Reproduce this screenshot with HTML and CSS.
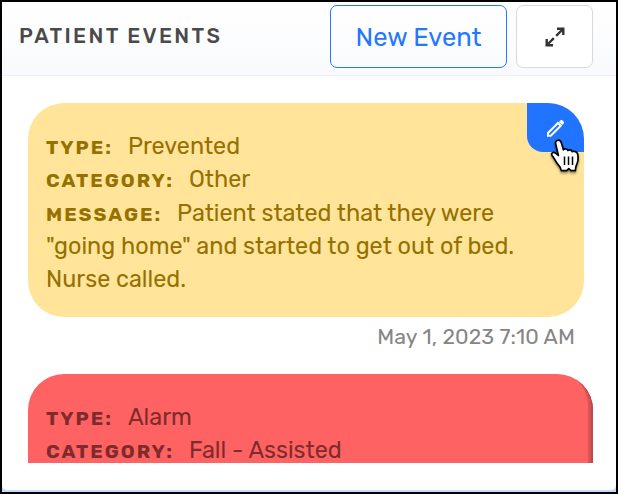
FILE: index.html
```html
<!DOCTYPE html>
<html lang="en">
<head>
    <meta charset="UTF-8">
    <meta name="viewport" content="width=device-width, initial-scale=1.0">
    <title>Patient Events</title>
    <link rel="stylesheet" href="styles.css">
</head>
<body>
    <div class="frame">
        <div class="panel">
            <div class="panel-header">
                <h1>PATIENT EVENTS</h1>
                <button class="new-button">New Event</button>
                <button class="expand-button" aria-label="Expand">
                    <svg width="20" height="20" viewBox="0 0 20 20" fill="none" stroke="#333" stroke-width="2.4">
                        <path d="M12 1.700h6.300V8M18 2l-6.800 6.800M8 18.300H1.700V12M2 18l6.800-6.800"/>
                    </svg>
                </button>
            </div>

            <div class="event-list">
                <div class="event warning">
                    <p><b>TYPE:</b><span class="value">Prevented</span></p>
                    <p><b>CATEGORY:</b><span class="value">Other</span></p>
                    <p><b>MESSAGE:</b><span class="value">Patient stated that they were<br>"going home" and started to get out of bed.<br>Nurse called.</span></p>
                    <button class="edit-button" aria-label="Edit">
                        <svg width="20" height="20" viewBox="0 0 20 20" fill="none" stroke="#fff" stroke-width="2">
                            <path d="M2 15 12 5l2.800 2.800L4.800 17.800H2z"/>
                            <path d="M13 3.900l1.700-1.700q.8-.7 1.600 0l1.500 1.500q.7.8 0 1.600l-1.700 1.700z" fill="#fff" stroke="none"/>
                        </svg>
                    </button>
                    <!-- hand pointer -->
                    <svg class="pointer" width="34" height="36" viewBox="0 0 34 36">
                        <path d="M9.500 2.200c1.900 0 2.700 1.600 3.200 3.600l1.700 6c1-1.400 3.600-1.300 4.500.700 1.300-1.200 3.600-.700 4.300 1.100 2-.900 4.900.100 5.500 2.700.6 3 .5 6.500-.6 9.200-.8 2-1.700 3-1.700 7.200h-4.500l-2.100-2-2 2h-5.500c-.3-3.700-2.700-5.400-4.400-7.700-1.700-2.300-2.700-5.300-4.600-7.200-1.300-1.400-.6-3.600 1.600-3.500 1.700.1 3 1.600 4.500 3.200L6.800 6.400C6 3.900 7.500 2.200 9.500 2.200z" fill="#fff" stroke="#000" stroke-width="1.700" stroke-linejoin="round"/>
                        <path d="M15.500 18.500v8.500M19.500 18.500v8.500M23.500 18.500v8.500" fill="none" stroke="#000" stroke-width="1.500"/>
                    </svg>
                </div>
                <time>May 1, 2023 7:10 AM</time>
                <div class="event danger">
                    <p><b>TYPE:</b><span class="value">Alarm</span></p>
                    <p><b>CATEGORY:</b><span class="value">Fall - Assisted</span></p>
                </div>
            </div>
        </div>
    </div>
</body>
</html>
```
FILE: styles.css
```css
* {
    margin: 0;
    padding: 0;
    box-sizing: border-box;
    font-family: Rubik, Roboto, sans-serif;
}

.frame {
    width: 618px;
    height: 494px;
    padding-bottom: 2px;
    border: 2px solid #000;
    background: #c9d9fb;
    overflow: hidden;
}

.panel {
    height: 488px;
    background: #fff;
    border-radius: 0 0 5px 5px;
}

.panel-header {
    display: flex;
    height: 74px;
    padding: 3px 23px 0 17px;
    border-bottom: 1px solid #eeeffa;
    background: linear-gradient(#fff, #f9fafd);
}

.panel-header h1 {
    flex: 1;
    color: #4a4a4a;
    font-size: 21px;
    font-weight: 500;
    line-height: 61px;
    letter-spacing: 2.3px;
    white-space: nowrap;
}

.panel-header button {
    height: 63px;
    border-radius: 7px;
}

.new-button {
    width: 177px;
    border: 1px solid #2478ff;
    background: transparent;
    color: #2478ff;
    font-size: 25.5px;
}

.expand-button {
    display: flex;
    align-items: center;
    justify-content: center;
    width: 77px;
    margin-left: 9px;
    border: 1px solid #d9d9dc;
    background: #fff;
}

.event-list {
    display: flex;
    flex-direction: column;
    height: 387px;
    padding: 27px 23px 0 26px;
    overflow: hidden;
}

.event {
    position: relative;
    flex-shrink: 0;
    padding: 27px 18px 0;
    border-radius: 36px;
    font-size: 23.4px;
    line-height: 33.3px;
}

.event p {
    white-space: nowrap;
}

.event b {
    margin-right: 15px;
    font-size: 19.5px;
    line-height: 1;
    letter-spacing: 2px;
}

.value {
    letter-spacing: 0;
}

.warning {
    width: 556px;
    height: 214px;
    background: #ffe499;
    color: #967000;
}

.danger {
    height: 214px;
    background: #ff6262;
    color: #7d2b2b;
    box-shadow: inset -2px -2px #b94a4d, inset -5px -4px #da5456;
}

.edit-button {
    position: absolute;
    top: 0;
    right: 0;
    display: flex;
    align-items: center;
    justify-content: center;
    width: 57px;
    height: 49px;
    border: none;
    border-radius: 0 36px 0 16px;
    background: #2074ff;
}

.pointer {
    position: absolute;
    top: 35px;
    left: 521px;
    filter: drop-shadow(0 2px 1px rgba(0, 0, 0, 0.4));
}

time {
    flex-shrink: 0;
    height: 57px;
    padding-right: 18px;
    color: #858585;
    font-size: 21.3px;
    line-height: 39px;
    letter-spacing: 0.1px;
    text-align: right;
}
```
